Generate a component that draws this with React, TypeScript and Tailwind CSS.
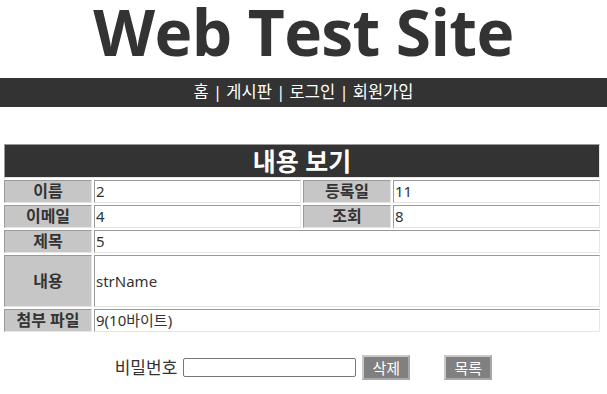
import React from "react";

const ko = { fontFamily: '"Noto Sans", "Noto Sans CJK KR", sans-serif' };

function Label({ children, rowSpanH }: { children: React.ReactNode; rowSpanH?: string }) {
  return (
    <td
      className={`bg-[#c6c6c6] border border-t-[#9a9a9a] border-l-[#9a9a9a] border-b-[#e6e6e6] border-r-[#e6e6e6] text-center font-bold text-[16px] text-[#333] p-0 leading-[21px] ${rowSpanH ?? "h-[23px]"}`}
    >
      {children}
    </td>
  );
}

function Value({ children, colSpan, h }: { children: React.ReactNode; colSpan?: number; h?: string }) {
  return (
    <td
      colSpan={colSpan}
      className={`bg-white border border-t-[#9a9a9a] border-l-[#9a9a9a] border-b-[#e6e6e6] border-r-[#e6e6e6] text-left text-[15px] text-[#333] p-0 pl-[1px] leading-[21px] ${h ?? "h-[23px]"}`}
    >
      {children}
    </td>
  );
}

export default function App() {
  return (
    <div className="w-[607px] h-[394px] bg-white overflow-hidden" style={ko}>
      <div className="h-[78px] flex justify-center">
        <div
          className="text-[64px] font-bold text-[#333] leading-[78px] mt-[-7px] tracking-[-0.6px]"
          style={{ fontFamily: '"Open Sans", "Noto Sans", sans-serif' }}
        >
          Web Test Site
        </div>
      </div>
      <div className="h-[29px] bg-[#333] text-white text-[16.5px] leading-[28px] text-center">
        홈 | 게시판 | 로그인 | 회원가입
      </div>
      <div className="h-[35px]" />
      <table className="ml-[2px] w-[600px] table-fixed border-separate border-spacing-[2px]">
        <colgroup>
          <col className="w-[88px]" />
          <col className="w-[207px]" />
          <col className="w-[88px]" />
          <col className="w-[207px]" />
        </colgroup>
        <tbody>
          <tr>
            <td
              colSpan={4}
              className="bg-[#333] h-[34px] border border-t-[#9a9a9a] border-l-[#9a9a9a] border-b-[#e6e6e6] border-r-[#e6e6e6] text-center text-white font-bold text-[25px] leading-[30px] p-0"
            >
              내용 보기
            </td>
          </tr>
          <tr>
            <Label>이름</Label>
            <Value>2</Value>
            <Label>등록일</Label>
            <Value>11</Value>
          </tr>
          <tr>
            <Label>이메일</Label>
            <Value>4</Value>
            <Label>조회</Label>
            <Value>8</Value>
          </tr>
          <tr>
            <Label>제목</Label>
            <Value colSpan={3}>5</Value>
          </tr>
          <tr>
            <Label rowSpanH="h-[52px]">내용</Label>
            <Value colSpan={3} h="h-[52px]">
              strName
            </Value>
          </tr>
          <tr>
            <Label>첨부 파일</Label>
            <Value colSpan={3}>9(10바이트)</Value>
          </tr>
        </tbody>
      </table>
      <div className="mt-[21px] flex items-center justify-center text-[#333]">
        <span className="text-[17px] leading-[20px]">비밀번호</span>
        <input
          type="password"
          className="ml-[6px] w-[173px] h-[19px] border border-[#767676] rounded-[2px] bg-white"
        />
        <button className="ml-[6px] w-[48px] h-[25px] bg-[#808080] text-white text-[15px] leading-[20px] border-2 border-t-[#c8c8c8] border-l-[#c8c8c8] border-b-[#a8a8a8] border-r-[#a8a8a8]">
          삭제
        </button>
        <button className="ml-[34px] w-[48px] h-[25px] bg-[#808080] text-white text-[15px] leading-[20px] border-2 border-t-[#c8c8c8] border-l-[#c8c8c8] border-b-[#a8a8a8] border-r-[#a8a8a8]">
          목록
        </button>
      </div>
    </div>
  );
}
